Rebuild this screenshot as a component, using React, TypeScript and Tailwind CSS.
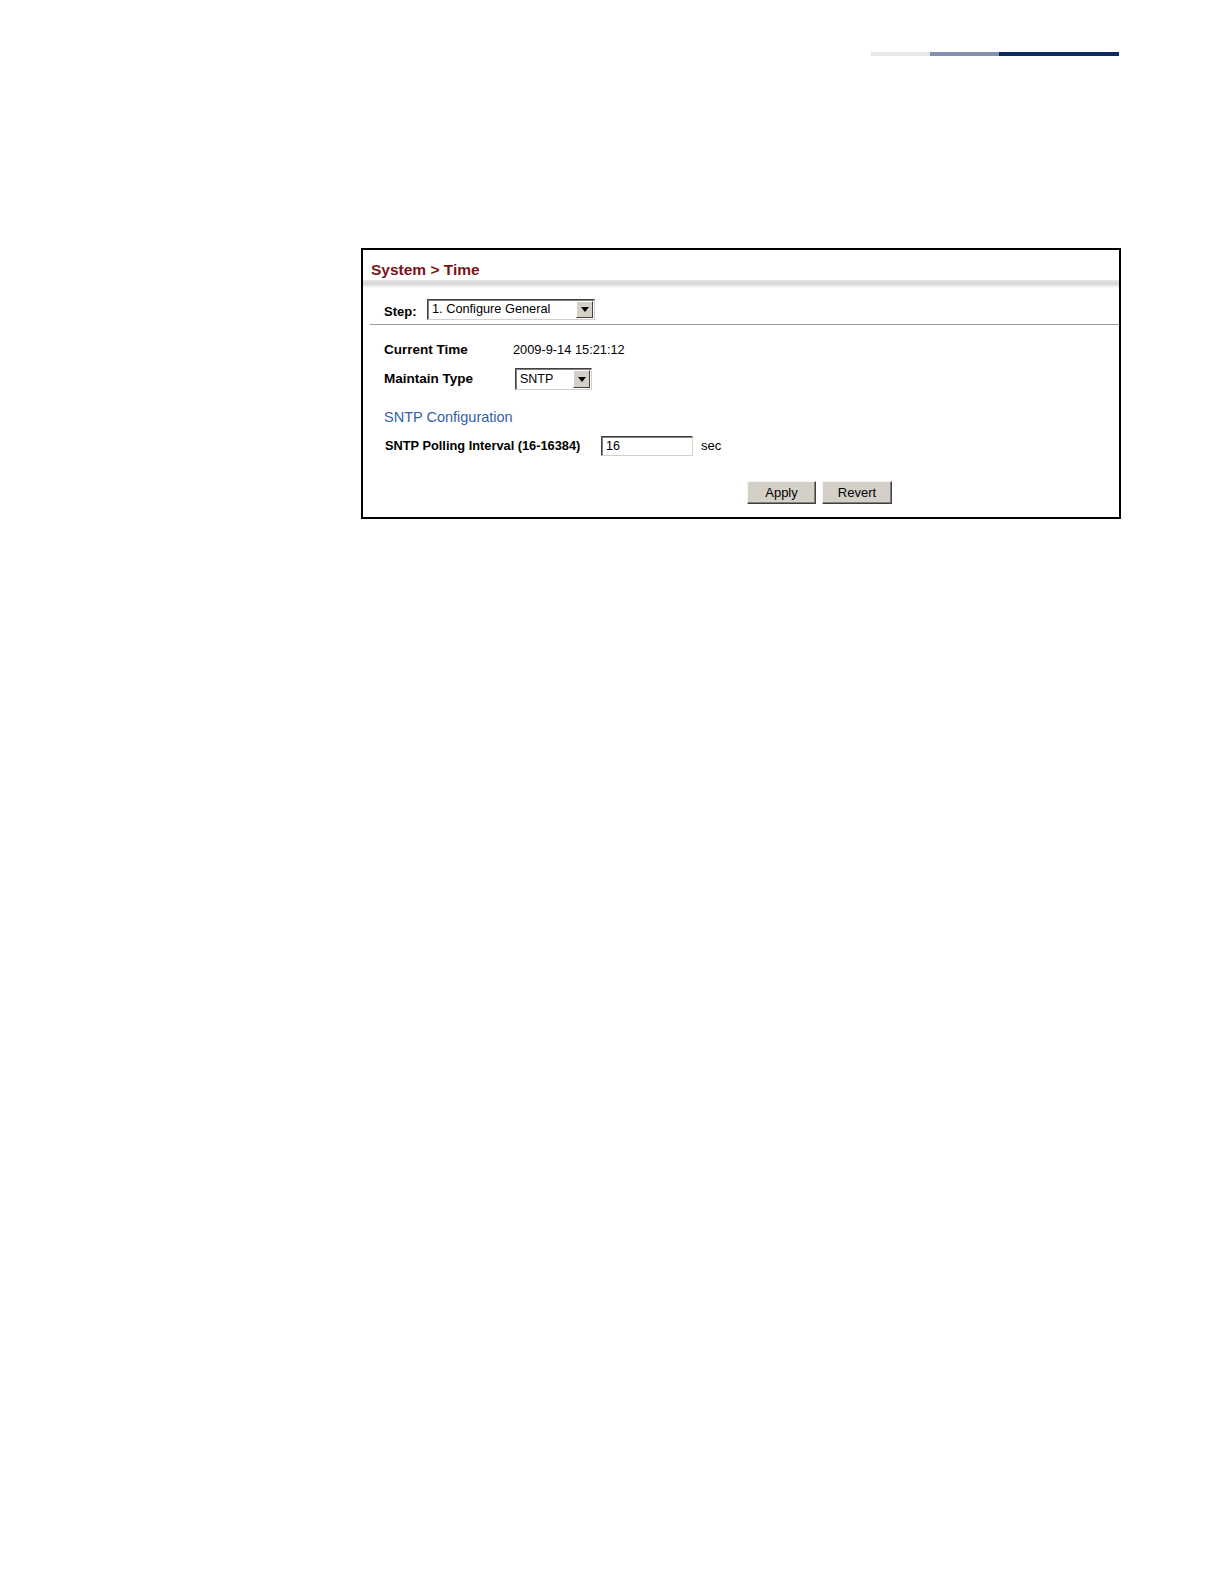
import React from 'react'

function Arrow() {
  return (
    <svg width="8" height="5" viewBox="0 0 8 5">
      <path d="M0 0 H8 L4 5 Z" fill="#000" />
    </svg>
  )
}

function FakeSelect({ value, width, height, size }: { value: string; width: string; height: string; size: string }) {
  return (
    <div
      className={`${width} ${height} flex items-stretch bg-white border border-t-[#404040] border-l-[#404040] border-b-[#d4d0c8] border-r-[#d4d0c8] shadow-[inset_1px_1px_0_#808080]`}
    >
      <span className={`flex-1 pl-[4px] flex items-center ${size} text-black leading-none`}>{value}</span>
      <span className="w-[17px] my-[1px] mr-[1px] bg-[#d4d0c8] border border-t-white border-l-white border-b-[#404040] border-r-[#404040] flex items-center justify-center">
        <Arrow />
      </span>
    </div>
  )
}

function Btn({ label, width }: { label: string; width: string }) {
  return (
    <button
      className={`${width} h-[23px] bg-[#d4d0c8] border border-t-[#f4f4f4] border-l-[#f4f4f4] border-b-[#404040] border-r-[#404040] shadow-[inset_-1px_-1px_0_#808080] text-[13px] text-black leading-none`}
    >
      {label}
    </button>
  )
}

export default function App() {
  return (
    <div className="w-full min-h-screen bg-white font-['Liberation_Sans',Arial,sans-serif]">
      <div className="pt-[52px] pl-[871px] flex">
        <div className="w-[59px] h-[4px] bg-[#e6e7e8]" />
        <div className="w-[69px] h-[4px] bg-[#8490b0]" />
        <div className="w-[120px] h-[4px] bg-[#0d2a5f]" />
      </div>

      <div className="ml-[361px] mt-[192px] w-[760px] h-[271px] border-2 border-black flex flex-col">
        <div className="h-[30px] pl-[8px] flex items-end pb-[3px]">
          <span className="text-[15.5px] font-bold text-[#7a1416] leading-none">System &gt; Time</span>
        </div>
        <div className="h-[8px] bg-gradient-to-b from-[#e4e4e4] via-[#d8d8d8] to-white" />

        <div className="h-[36px] pl-[21px] flex items-start pt-[11px]">
          <span className="w-[43px] pt-[6px] text-[13px] font-bold text-black leading-none">Step:</span>
          <FakeSelect value="1. Configure General" width="w-[168px]" height="h-[21px]" size="text-[12.75px]" />
        </div>
        <div className="ml-[7px] h-px bg-[#9a9a9a]" />

        <div className="pl-[21px] flex flex-col">
          <div className="mt-[14px] h-[22px] flex items-center">
            <span className="w-[129px] text-[13.5px] font-bold text-black">Current Time</span>
            <span className="text-[12.8px] text-black">2009-9-14 15:21:12</span>
          </div>
          <div className="mt-[7px] h-[22px] flex items-center">
            <span className="w-[131px] text-[13.5px] font-bold text-black">Maintain Type</span>
            <FakeSelect value="SNTP" width="w-[77px]" height="h-[22px]" size="text-[12.5px]" />
          </div>
          <div className="mt-[18px] h-[20px] flex items-center">
            <span className="text-[14.5px] text-[#3461a8]">SNTP Configuration</span>
          </div>
          <div className="mt-[8px] h-[20px] flex items-center">
            <span className="ml-[1px] w-[216px] text-[12.8px] font-bold text-black">SNTP Polling Interval (16-16384)</span>
            <div className="w-[92px] h-[20px] bg-white border border-t-[#404040] border-l-[#404040] border-b-[#d4d0c8] border-r-[#d4d0c8] shadow-[inset_1px_1px_0_#808080] pl-[4px] flex items-center text-[12.5px] text-black">
              16
            </div>
            <span className="ml-[8px] text-[13px] text-black">sec</span>
          </div>
        </div>

        <div className="mt-[25px] pl-[384px] flex gap-[6px]">
          <Btn label="Apply" width="w-[69px]" />
          <Btn label="Revert" width="w-[70px]" />
        </div>
      </div>
    </div>
  )
}
